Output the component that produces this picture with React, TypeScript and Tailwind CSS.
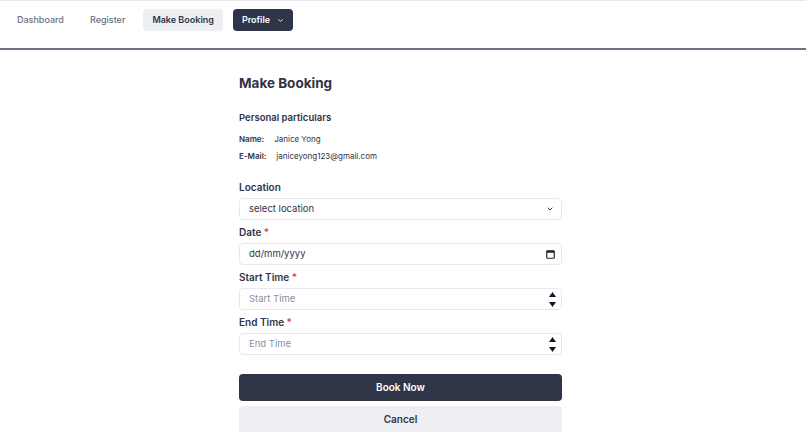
import React from "react";

const Spinner = () => (
  <div className="flex flex-col items-center justify-center gap-[5px] pr-[3px]">
    <svg width="7" height="5" viewBox="0 0 7 5">
      <path d="M3.5 0 L7 5 L0 5 Z" fill="#111827" />
    </svg>
    <svg width="7" height="5" viewBox="0 0 7 5">
      <path d="M0 0 L7 0 L3.5 5 Z" fill="#111827" />
    </svg>
  </div>
);

const Label = ({ text, required }: { text: string; required?: boolean }) => (
  <div className="text-[10px] font-semibold text-[#2f3447] leading-[14px]">
    {text}
    {required && <span className="text-[#e53e3e]"> *</span>}
  </div>
);

export default function App() {
  return (
    <div
      className="min-h-[432px] bg-white overflow-hidden"
      style={{ fontFamily: "Inter, 'Noto Sans', sans-serif" }}
    >
      {/* nav bar */}
      <header className="h-[50px] border-t border-[#e8e8ec] border-b-2 border-b-[#6e7283] flex items-start pt-[8px] pl-[8px] gap-[8px]">
        <a className="h-[22px] px-[9px] flex items-center text-[9px] font-medium text-[#6b7280]">Dashboard</a>
        <a className="h-[22px] px-[9px] flex items-center text-[9px] font-medium text-[#6b7280]">Register</a>
        <a className="ml-[1px] h-[22px] px-[9px] flex items-center rounded-[4px] bg-[#eeeff3] text-[9px] font-semibold text-[#2f3447]">
          Make Booking
        </a>
        <button className="ml-[2px] h-[22px] px-[9px] flex items-center gap-[7px] rounded-[4px] bg-[#2f3447] text-[9px] font-semibold text-white">
          Profile
          <svg width="7" height="7" viewBox="0 0 24 24" fill="none" stroke="white" strokeWidth="3" strokeLinecap="round" strokeLinejoin="round">
            <path d="m6 9 6 6 6-6" />
          </svg>
        </button>
      </header>

      <main className="w-[323px] ml-[239px] pt-[24px]">
        <h1 className="text-[13.5px] font-bold text-[#2f3447] leading-[18px]">Make Booking</h1>

        <h2 className="mt-[19px] text-[9.5px] font-semibold text-[#2f3447] leading-[14px]">
          Personal particulars
        </h2>
        <div className="mt-[8px] text-[8px] text-[#2f3447] leading-[12px] flex gap-[10px]">
          <span className="font-semibold">Name:</span>
          <span>Janice Yong</span>
        </div>
        <div className="mt-[5px] text-[8px] text-[#2f3447] leading-[12px] flex gap-[10px]">
          <span className="font-semibold">E-Mail:</span>
          <span>janiceyong123@gmail.com</span>
        </div>

        <div className="mt-[18px]">
          <Label text="Location" />
          <div className="mt-[4px] h-[22px] rounded-[4px] border border-[#e8e9ee] flex items-center justify-between pl-[9px] pr-[7px] text-[9.5px] text-[#2f3447]">
            <span>select location</span>
            <svg width="8" height="8" viewBox="0 0 24 24" fill="none" stroke="#2f3447" strokeWidth="3" strokeLinecap="round" strokeLinejoin="round">
              <path d="m6 9 6 6 6-6" />
            </svg>
          </div>
        </div>

        <div className="mt-[5px]">
          <Label text="Date" required />
          <div className="mt-[4px] h-[22px] rounded-[4px] border border-[#e8e9ee] flex items-center justify-between pl-[9px] pr-[6px] text-[9.5px] text-[#2f3447]">
            <span>dd/mm/yyyy</span>
            <svg width="9" height="9" viewBox="0 0 9 9">
              <rect x="0.75" y="0.75" width="7.5" height="7.5" rx="0.8" fill="none" stroke="#1f2430" strokeWidth="1.2" />
              <rect x="0.75" y="0.75" width="7.5" height="2" fill="#1f2430" />
            </svg>
          </div>
        </div>

        <div className="mt-[5px]">
          <Label text="Start Time" required />
          <div className="mt-[4px] h-[22px] rounded-[4px] border border-[#e8e9ee] flex items-stretch justify-between pl-[9px] pr-[2px]">
            <input
              type="text"
              placeholder="Start Time"
              className="flex-1 bg-transparent outline-none text-[9.5px] text-[#2f3447] placeholder:text-[#8b8f9c]"
            />
            <Spinner />
          </div>
        </div>

        <div className="mt-[5px]">
          <Label text="End Time" required />
          <div className="mt-[4px] h-[22px] rounded-[4px] border border-[#e8e9ee] flex items-stretch justify-between pl-[9px] pr-[2px]">
            <input
              type="text"
              placeholder="End Time"
              className="flex-1 bg-transparent outline-none text-[9.5px] text-[#2f3447] placeholder:text-[#8b8f9c]"
            />
            <Spinner />
          </div>
        </div>

        <button className="mt-[19px] w-full h-[27px] rounded-[4px] bg-[#2f3447] text-white text-[10px] font-semibold">
          Book Now
        </button>
        <button className="mt-[5px] w-full h-[27px] rounded-[4px] bg-[#eeeef3] text-[#2f3447] text-[10px] font-semibold">
          Cancel
        </button>
      </main>
    </div>
  );
}
